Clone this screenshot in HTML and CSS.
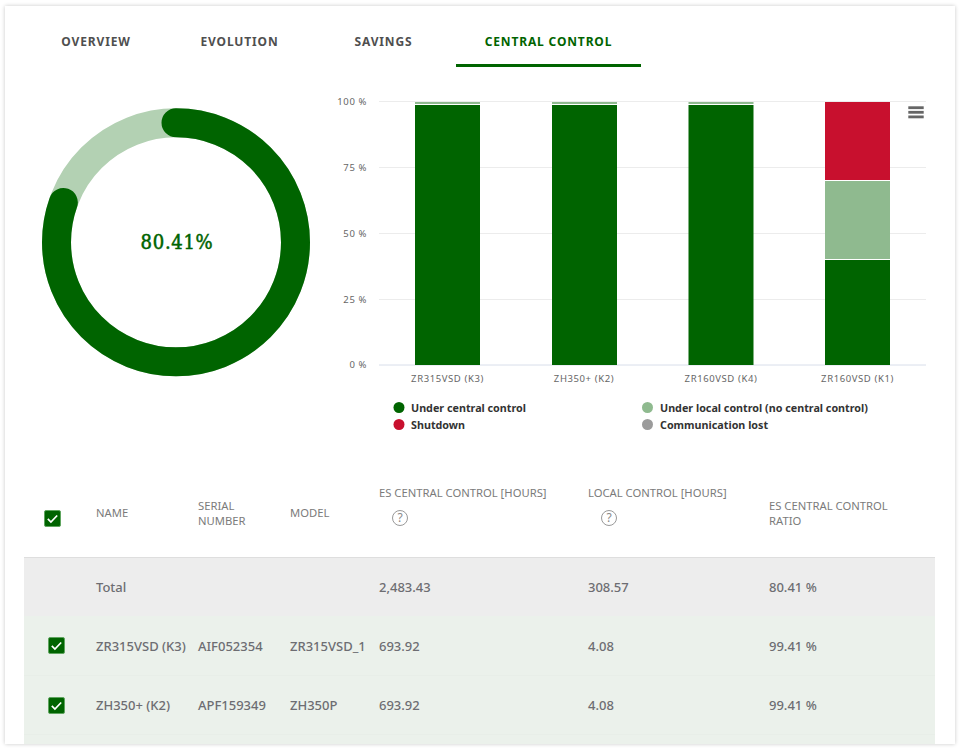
FILE: index.html
```html
<!DOCTYPE html>
<html lang="en">
<head>
<meta charset="utf-8">
<title>Central control</title>
<link rel="stylesheet" href="styles.css">
</head>
<body>
<main class="card">
  <nav class="tabs">
    <a class="tab">OVERVIEW</a>
    <a class="tab">EVOLUTION</a>
    <a class="tab">SAVINGS</a>
    <a class="tab active">CENTRAL CONTROL</a>
  </nav>
  <section class="charts">
    <svg class="donut" width="300" height="300" viewBox="0 0 300 300">
      <circle class="donut-track" cx="150" cy="150.300" r="119.500"/>
      <circle class="donut-value" cx="150" cy="150.300" r="119.500" pathLength="100" stroke-dasharray="80.41 100" transform="rotate(-90 150 150.300)"/>
      <text class="donut-label" x="151" y="157" text-anchor="middle">80.41%</text>
    </svg>
    <svg class="bars" width="605" height="402" viewBox="330 67 605 402">
      <g class="axis-y" text-anchor="end">
        <text x="367" y="105">100 %</text>
        <text x="367" y="171">75 %</text>
        <text x="367" y="237">50 %</text>
        <text x="367" y="303">25 %</text>
        <text x="367" y="368">0 %</text>
      </g>
      <g class="grid">
        <line x1="379" x2="926" y1="101.5" y2="101.5"/>
        <line x1="379" x2="926" y1="167.5" y2="167.5"/>
        <line x1="379" x2="926" y1="233.5" y2="233.5"/>
        <line x1="379" x2="926" y1="299.5" y2="299.5"/>
      </g>
      <line class="baseline" x1="379" x2="926" y1="365" y2="365"/>
      <g class="bar-set">
        <rect class="light" x="415" y="102" width="65" height="2"/>
        <rect class="dark" x="415" y="105" width="65" height="260"/>
        <rect class="light" x="552" y="102" width="65" height="2"/>
        <rect class="dark" x="552" y="105" width="65" height="260"/>
        <rect class="light" x="688.5" y="102" width="65" height="2"/>
        <rect class="dark" x="688.5" y="105" width="65" height="260"/>
        <rect class="red" x="825" y="102" width="65" height="78"/>
        <rect class="light" x="825" y="181" width="65" height="78"/>
        <rect class="dark" x="825" y="260" width="65" height="105"/>
      </g>
      <g class="axis-x" text-anchor="middle">
        <text x="447.5" y="382">ZR315VSD (K3)</text>
        <text x="584" y="382">ZH350+ (K2)</text>
        <text x="721" y="382">ZR160VSD (K4)</text>
        <text x="857.5" y="382">ZR160VSD (K1)</text>
      </g>
      <g class="legend">
        <circle class="dark" cx="399" cy="407.500" r="5.500"/>
        <text x="411" y="412">Under central control</text>
        <circle class="light" cx="647.500" cy="407.500" r="5.500"/>
        <text x="660" y="412">Under local control (no central control)</text>
        <circle class="red" cx="399" cy="424.500" r="5.500"/>
        <text x="411" y="429">Shutdown</text>
        <circle class="grey" cx="647.500" cy="424.500" r="5.500"/>
        <text x="660" y="429">Communication lost</text>
      </g>
      <g class="menu">
        <rect x="908.300" y="106.300" width="15.400" height="2.800"/>
        <rect x="908.300" y="110.900" width="15.400" height="2.800"/>
        <rect x="908.300" y="115.500" width="15.400" height="2.800"/>
      </g>
    </svg>
  </section>
  <table class="data">
    <colgroup>
      <col class="c-check"><col class="c-name"><col class="c-serial"><col class="c-model"><col class="c-central"><col class="c-local"><col class="c-ratio">
    </colgroup>
    <thead>
      <tr>
        <th><span class="check check-head"><svg viewBox="0 0 16 16" width="16" height="16"><path d="M3 8.500l3.300 3.300 6.700-7"/></svg></span></th>
        <th>NAME</th>
        <th>SERIAL<br>NUMBER</th>
        <th>MODEL</th>
        <th><span class="head-text">ES CENTRAL CONTROL [HOURS]</span><span class="help">?</span></th>
        <th><span class="head-text">LOCAL CONTROL [HOURS]</span><span class="help">?</span></th>
        <th>ES CENTRAL CONTROL<br>RATIO</th>
      </tr>
    </thead>
    <tbody>
      <tr class="total">
        <td></td><td>Total</td><td></td><td></td><td>2,483.43</td><td>308.57</td><td>80.41 %</td>
      </tr>
      <tr>
        <td><span class="check"><svg viewBox="0 0 16 16" width="16" height="16"><path d="M3 8.500l3.300 3.300 6.700-7"/></svg></span></td>
        <td>ZR315VSD (K3)</td><td>AIF052354</td><td>ZR315VSD_1</td><td>693.92</td><td>4.08</td><td>99.41 %</td>
      </tr>
      <tr>
        <td><span class="check"><svg viewBox="0 0 16 16" width="16" height="16"><path d="M3 8.500l3.300 3.300 6.700-7"/></svg></span></td>
        <td>ZH350+ (K2)</td><td>APF159349</td><td>ZH350P</td><td>693.92</td><td>4.08</td><td>99.41 %</td>
      </tr>
      <tr>
        <td></td><td></td><td></td><td></td><td></td><td></td><td></td>
      </tr>
    </tbody>
  </table>
</main>
</body>
</html>
```
FILE: styles.css
```css
* { box-sizing: border-box; }
html, body { margin: 0; padding: 0; background: #fff; }
body { padding: 6px 7px 8px 5px; font-family: "Noto Sans", sans-serif; }
.card {
  width: 950px;
  height: 738px;
  padding: 10px 20px 0 19px;
  background: #fff;
  box-shadow: 0 0 4px rgba(0, 0, 0, .22);
  overflow: hidden;
}
.tabs {
  display: grid;
  grid-template-columns: 144px 143px 145px 185px;
  height: 51px;
}
.tab {
  display: block;
  padding-top: 17px;
  text-align: center;
  font-size: 12px;
  line-height: 18px;
  font-weight: 700;
  letter-spacing: .85px;
  color: #4f4f4f;
}
.tab.active { color: #006400; border-bottom: 3px solid #006400; }
.charts { display: flex; height: 402px; }
.donut { flex: none; margin: 25px 4px 0 2px; }
.donut-track, .donut-value { fill: none; stroke-width: 29; }
.donut-track { stroke: #b3d1b3; }
.donut-value { stroke: #006400; stroke-linecap: round; }
.donut-label { font-family: "DejaVu Serif", serif; font-size: 20px; font-stretch: condensed; font-weight: 400; letter-spacing: .7px; stroke: #006400; stroke-width: .5px; fill: #006400; }
.bars { flex: none; }
.axis-y text, .axis-x text { font-size: 9.500px; letter-spacing: .6px; fill: #666; }
.grid line { stroke: #ececec; stroke-width: 1; }
.baseline { stroke: #d8deea; stroke-width: 1; }
.dark { fill: #006400; }
.light { fill: #8fba8f; }
.red { fill: #c8102e; }
.grey { fill: #9b9b9b; }
.legend text { font-size: 10.750px; font-weight: 700; fill: #333; }
.menu rect { fill: #666; }
.data {
  width: 911px;
  border-collapse: collapse;
  table-layout: fixed;
  color: #6d6d72;
}
.c-check { width: 72px; }
.c-name { width: 102px; }
.c-serial { width: 92px; }
.c-model { width: 89px; }
.c-central { width: 209px; }
.c-local { width: 181px; }
.c-ratio { width: 166px; }
.data th {
  height: 88px;
  padding: 0;
  text-align: left;
  vertical-align: middle;
  font-size: 11.250px;
  line-height: 15px;
  font-weight: 400;
  color: #7b7b7b;
  border-bottom: 1px solid #dedede;
}
.data td {
  height: 59px;
  padding: 1px 0 0;
  font-size: 13px;
  font-weight: 500;
  background: #ebf1eb;
  border-bottom: 1px solid #e8eee8;
  white-space: nowrap;
}
.data .total td { background: #ededed; border-bottom: 0; padding-top: 0; }
.check {
  display: block;
  width: 17px;
  height: 17px;
  margin-left: 24px;
  background: #006400;
  border: 1px solid #5fa55f;
  border-radius: 2px;
}
.check-head { margin: 11px 0 0 20px; }
.check svg { display: block; width: 15px; height: 15px; }
.check path { fill: none; stroke: #fff; stroke-width: 1.800; }
.head-text { display: block; margin-bottom: 10px; }
.help {
  display: block;
  width: 16px;
  height: 16px;
  margin: 0 0 14px 13px;
  border: 1.500px solid #999;
  border-radius: 50%;
  text-align: center;
  font-size: 12px;
  line-height: 13px;
  color: #888;
}
```
